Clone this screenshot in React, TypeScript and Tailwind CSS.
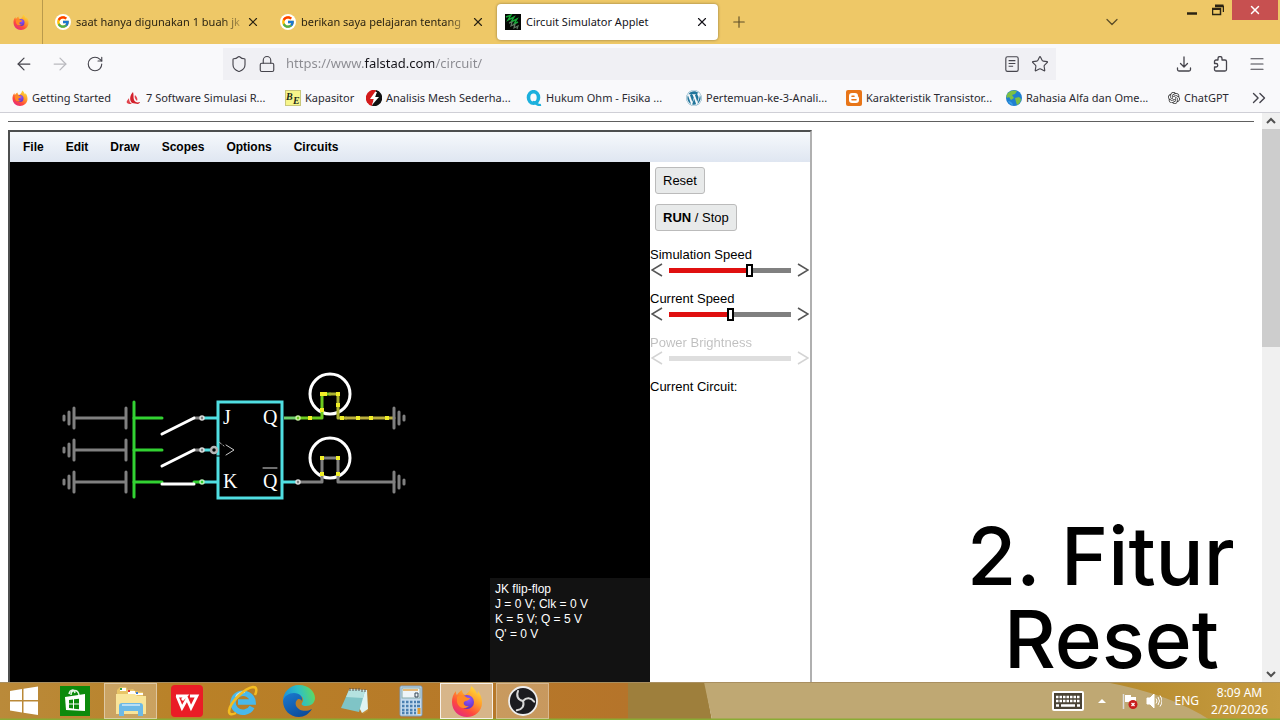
import type { ReactNode } from "react";
import { useState } from "react";
import {
  ArrowLeft,
  ArrowRight,
  ChevronDown,
  ChevronsRight,
  Lock,
  Menu,
  Plus,
  RotateCw,
  Shield,
  Star,
  X,
} from "lucide-react";
import { FcGoogle } from "react-icons/fc";
import { FaWordpress } from "react-icons/fa";
import { SiOpenai } from "react-icons/si";

function FirefoxIcon({ className }: { className: string }) {
  return (
    <svg viewBox="0 0 32 32" className={className} aria-hidden="true">
      <defs>
        <linearGradient id="fox" x1="0.85" y1="0" x2="0.2" y2="1">
          <stop offset="0" stopColor="#ffe63d" />
          <stop offset="0.4" stopColor="#ff9a2a" />
          <stop offset="0.7" stopColor="#ff4a3d" />
          <stop offset="1" stopColor="#e0258a" />
        </linearGradient>
        <radialGradient id="globe" cx="0.6" cy="0.3" r="0.8">
          <stop offset="0" stopColor="#9059ff" />
          <stop offset="1" stopColor="#5b2bb5" />
        </radialGradient>
      </defs>
      <path
        fill="url(#fox)"
        d="M20 1c3 2 5 5 6 8 1-1 1-2 1-3 3 4 4 8 4 12 0 8-7 14-15 14S1 26 1 17c0-4 1-8 4-11 0 2 0 3 1 4 1-2 3-4 5-5 0 2 1 4 3 5 3-2 6-5 6-9z"
      />
      <circle cx="16" cy="17" r="7" fill="url(#globe)" />
      <path fill="#ff8a26" d="M6 12c4-3 7-2 9 0 1 1 3 1 4 1-1 3-4 2-6 4-1 2 1 5 5 4-4 4-11 2-12-4z" />
    </svg>
  );
}

function CircuitIcon() {
  return (
    <svg viewBox="0 0 16 16" className="size-4 shrink-0" aria-hidden="true">
      <rect width="16" height="16" fill="#050805" />
      <path d="M1 3l5-2-3 5 6-3-3 5 6-3-3 5 4-2" fill="none" stroke="#16a836" strokeWidth="1.4" />
      <path d="M4 9l3-1-1 4 4-2-1 4 4-2-1 3" fill="none" stroke="#5f7562" strokeWidth="1.2" />
    </svg>
  );
}

function FlameIcon() {
  return (
    <svg viewBox="0 0 16 16" className="size-4 shrink-0" aria-hidden="true">
      <path fill="#d3202b" d="M7 2c-3 3-4 8-1 11l6 1c2-1 2-2 2-2-3 1-5 0-6-2-1-3 0-5-1-8z" />
      <path fill="#e0444c" d="M3 8c-1 2-3 3-2 5 1 1 3 1 5 1-2-1-3-3-3-6zM9 5c-1 2 0 4 2 6 1-2 0-4-2-6z" />
    </svg>
  );
}

function BasicElectronicsIcon() {
  return (
    <svg viewBox="0 0 16 16" className="size-4 shrink-0" aria-hidden="true">
      <rect x="0.5" y="0.5" width="15" height="15" fill="#f7f58a" stroke="#c9c77a" />
      <text x="1" y="10" fontFamily="Liberation Serif, serif" fontSize="10" fontWeight="700" fontStyle="italic" fill="#1c2b1c">
        B
      </text>
      <text x="8" y="14" fontFamily="Liberation Serif, serif" fontSize="10" fontWeight="700" fontStyle="italic" fill="#1c2b1c">
        E
      </text>
    </svg>
  );
}

function BoltIcon() {
  return (
    <svg viewBox="0 0 16 16" className="size-4 shrink-0" aria-hidden="true">
      <path fill="#d31b1b" d="M10 0A8 8 0 0 0 6 16l2-8z" />
      <path fill="#111" d="M10 0a8 8 0 0 1-4 16l3-8z" />
      <path fill="#fff" d="M9 2L4 9h4l-2 6 7-8H9l2-5z" />
    </svg>
  );
}

function QIcon() {
  return (
    <svg viewBox="0 0 16 16" className="size-4 shrink-0" aria-hidden="true">
      <ellipse cx="7.5" cy="7.5" rx="5" ry="5.8" fill="none" stroke="#1cb0dd" strokeWidth="3.6" />
      <path d="M7 12c3 0 4 4 8 3" fill="none" stroke="#1cb0dd" strokeWidth="2.4" />
    </svg>
  );
}

function BloggerIcon() {
  return (
    <svg viewBox="0 0 16 16" className="size-4 shrink-0" aria-hidden="true">
      <rect width="16" height="16" rx="2" fill="#e87518" />
      <path
        fill="#fff"
        fillRule="evenodd"
        d="M6 3h3a3 3 0 0 1 3 3c0 1 1 1 1 2v2a3 3 0 0 1-3 3H6a3 3 0 0 1-3-3V6a3 3 0 0 1 3-3zm0 2.5a.8.8 0 0 0 0 1.6h2a.8.8 0 0 0 0-1.6zm0 3.5a.8.8 0 0 0 0 1.6h4a.8.8 0 0 0 0-1.6z"
      />
    </svg>
  );
}

function EarthIcon() {
  return (
    <svg viewBox="0 0 16 16" className="size-4 shrink-0" aria-hidden="true">
      <circle cx="8" cy="8" r="8" fill="#1f7fd0" />
      <path fill="#7cc043" d="M2 3c3-3 7-3 9-2l-2 3-3 1 2 3-3 2-2-3-2 1c-1-2 0-4 1-5zM9 8l4-1 2 2c0 3-2 5-4 6l-1-3z" />
      <path fill="#3aa0e8" d="M2 11c2 0 4 1 5 4-2 0-4-2-5-4z" />
    </svg>
  );
}

type Bookmark = { label: string; width: string; icon: ReactNode };

const BOOKMARKS: Bookmark[] = [
  { label: "Getting Started", width: "w-[114px]", icon: <FirefoxIcon className="size-4 shrink-0" /> },
  { label: "7 Software Simulasi R...", width: "w-[159px]", icon: <FlameIcon /> },
  { label: "Kapasitor", width: "w-[81px]", icon: <BasicElectronicsIcon /> },
  { label: "Analisis Mesh Sederha...", width: "w-40", icon: <BoltIcon /> },
  { label: "Hukum Ohm - Fisika ...", width: "w-40", icon: <QIcon /> },
  { label: "Pertemuan-ke-3-Anali...", width: "w-40", icon: <FaWordpress className="size-4 shrink-0 text-[#21759b]" /> },
  { label: "Karakteristik Transistor...", width: "w-40", icon: <BloggerIcon /> },
  { label: "Rahasia Alfa dan Ome...", width: "w-[162px]", icon: <EarthIcon /> },
  { label: "ChatGPT", width: "w-20", icon: <SiOpenai className="size-3 shrink-0 text-[#333]" /> },
];

function SearchTab({ title }: { title: string }) {
  return (
    <div role="tab" aria-selected="false" className="flex w-[225px] shrink-0 items-center gap-[5px] pl-3">
      <span className="flex size-4 shrink-0 items-center justify-center rounded-full bg-white">
        <FcGoogle className="size-3.5" />
      </span>
      <span className="w-[166px] whitespace-nowrap [mask-image:linear-gradient(to_right,black_88%,transparent_103%)]">
        {title}
      </span>
      <button aria-label="Close tab" className="flex w-3 shrink-0 justify-center">
        <X className="size-3.5 shrink-0" strokeWidth={2} />
      </button>
    </div>
  );
}

function TabBar() {
  return (
    <div className="flex h-11 shrink-0 bg-[#eec867] text-[11px] text-[#2b2413]">
      <div role="tablist" className="flex items-stretch">
        <div role="tab" aria-selected="false" aria-label="Firefox" className="flex w-[43px] items-center justify-center border-r border-[#b99a4c]">
          <FirefoxIcon className="size-4" />
        </div>
        <SearchTab title="saat hanya digunakan 1 buah jk" />
        <SearchTab title="berikan saya pelajaran tentang" />
        <div
          role="tab"
          aria-selected="true"
          className="my-1 ml-1 flex w-[221px] items-center gap-[5px] rounded bg-white pr-[9px] pl-2 text-[#15141a] shadow-[0_0_3px_rgba(0,0,0,0.4)]"
        >
          <CircuitIcon />
          <span className="flex-1 whitespace-nowrap">Circuit Simulator Applet</span>
          <button aria-label="Close tab">
            <X className="size-3.5" strokeWidth={2} />
          </button>
        </div>
      </div>
      <button aria-label="New tab" className="ml-3 text-[#5c4d28]">
        <Plus className="size-[18px]" strokeWidth={1.5} />
      </button>
      <div className="ml-auto flex">
        <button aria-label="List all tabs" className="mr-[58px] text-[#5c4d28]">
          <ChevronDown className="size-5" strokeWidth={1.5} />
        </button>
        <button aria-label="Minimize" className="flex h-5 w-6 items-center justify-center">
          <svg viewBox="0 0 12 12" className="size-3">
            <path d="M1 9.5h10" stroke="#2b2413" strokeWidth="2.5" />
          </svg>
        </button>
        <button aria-label="Restore" className="flex h-5 w-7 items-center justify-center">
          <svg viewBox="0 0 12 12" className="size-3" fill="none" stroke="#2b2413">
            <path d="M3 2.5h8.5V8" strokeWidth="1.5" />
            <path d="M0.5 4.5h8v6h-8z" strokeWidth="1.5" />
            <path d="M0.5 5h8M3 1.5h8.5" strokeWidth="2" />
          </svg>
        </button>
        <button aria-label="Close" className="mr-0.5 flex h-5 w-[46px] items-center justify-center bg-[#c75050] text-white">
          <X className="size-3.5" strokeWidth={2.5} />
        </button>
      </div>
    </div>
  );
}

function NavBar() {
  return (
    <div className="flex h-10 shrink-0 items-center bg-[#f9f9fb] text-[#45444c]">
      <div className="flex w-[223px] shrink-0 items-center gap-4 pl-3.5">
        <button aria-label="Back" className="w-5">
          <ArrowLeft className="size-5" strokeWidth={1.5} />
        </button>
        <button aria-label="Forward" className="w-5 text-[#b9b9be]" disabled>
          <ArrowRight className="size-5" strokeWidth={1.5} />
        </button>
        <button aria-label="Reload" className="w-5">
          <RotateCw className="size-[18px]" strokeWidth={1.5} />
        </button>
      </div>
      <div className="flex h-8 flex-1 items-center bg-[#f0f0f4] px-[7px]">
        <Shield className="mr-2.5 size-[18px] shrink-0" strokeWidth={1.5} />
        <Lock className="mr-2.5 size-[18px] shrink-0" strokeWidth={1.5} />
        <input
          aria-label="Address"
          defaultValue="https://www.falstad.com/circuit/"
          className="min-w-0 flex-1 bg-[linear-gradient(to_right,#8a8a90_78px,#15141a_78px,#15141a_148px,#8a8a90_148px)] bg-clip-text text-[13px] text-transparent outline-none"
        />
        <button aria-label="Reader view" className="mr-2.5">
          <svg viewBox="0 0 16 16" className="size-[18px]" fill="none" stroke="currentColor">
            <rect x="2.5" y="1.5" width="11" height="13" rx="1.5" />
            <path d="M5 5h6M5 7.5h6M5 10h4" />
          </svg>
        </button>
        <button aria-label="Bookmark this page">
          <Star className="size-[18px]" strokeWidth={1.5} />
        </button>
      </div>
      <div className="ml-28 flex w-28 shrink-0 items-center justify-between pr-3.5 pl-2">
        <button aria-label="Downloads">
          <svg viewBox="0 0 16 16" className="size-4" fill="none" stroke="currentColor" strokeWidth="1.3" strokeLinecap="round" strokeLinejoin="round">
            <path d="M8 1v9.5M4.5 7.5L8 11l3.5-3.5M1.5 12v1.5a1.5 1.5 0 0 0 1.5 1.5h10a1.5 1.5 0 0 0 1.5-1.5V12" />
          </svg>
        </button>
        <button aria-label="Extensions">
          <svg viewBox="0 0 16 16" className="size-4" fill="none" stroke="currentColor" strokeWidth="1.3" strokeLinejoin="round">
            <path d="M6 4V2.5a2 2 0 0 1 4 0V4h3a1.5 1.5 0 0 1 1.5 1.5v8A1.5 1.5 0 0 1 13 15H4a1.5 1.5 0 0 1-1.5-1.5V11H4a1.7 1.7 0 0 0 0-3.5H2.500v-2A1.500 1.500 0 0 1 4 4z" />
          </svg>
        </button>
        <button aria-label="Menu">
          <Menu className="size-[18px]" strokeWidth={1.5} />
        </button>
      </div>
    </div>
  );
}

function BookmarksBar() {
  return (
    <nav className="flex h-[29px] shrink-0 items-center border-b border-[#cfcfd6] bg-[#f9f9fb] pl-3 text-[11px] text-[#2a2930]">
      {BOOKMARKS.map((b) => (
        <a key={b.label} href="#" className={`flex shrink-0 items-center gap-1 whitespace-nowrap ${b.width}`}>
          {b.icon}
          {b.label}
        </a>
      ))}
      <button aria-label="More bookmarks" className="ml-auto pr-2.5 text-[#45444c]">
        <ChevronsRight className="size-[22px]" strokeWidth={1.5} />
      </button>
    </nav>
  );
}

const ROWS = [418, 450, 482];

function Circuit() {
  return (
    <svg viewBox="10 162 640 520" className="block h-full w-full" fill="none" strokeWidth="3" strokeLinecap="round" role="img" aria-label="JK flip-flop circuit">
      {ROWS.map((y) => (
        <g key={y}>
          <path
            stroke="#808080"
            d={`M64 ${y - 2}v4M69 ${y - 6}v12M74 ${y - 10}v20M74 ${y}h52M126 ${y - 10}v20`}
          />
          <path stroke="#32d232" d={`M134 ${y}h28`} />
        </g>
      ))}
      <path stroke="#32d232" d="M134 402v95" />

      <path stroke="#808080" d="M194 418h8M194 450h8" />
      <path stroke="#32d232" d="M194 482h8" />
      <path stroke="#fff" d="M162 434l32-16M162 466l32-16M162 484h32" />
      <path stroke="#50dfe2" strokeLinecap="butt" d="M203 418h15M203 450h7M203 482h15M282 482h15" />
      <rect x="218" y="402" width="64" height="96" stroke="#50dfe2" />
      <path stroke="#000" strokeWidth="1" d="M216 456h4" />
      <circle cx="214" cy="450" r="3" stroke="#b5b5b5" strokeWidth="2.5" />
      <path stroke="#aaa" strokeWidth="1" strokeDasharray="3 2" d="M219 442l5 4" />
      <path stroke="#ccc" strokeWidth="1" d="M226 445l8 5-8 5" />
      <g strokeWidth="1.5" stroke="#ddd">
        <circle cx="202" cy="418" r="2" />
        <circle cx="202" cy="450" r="2" />
        <circle cx="202" cy="482" r="2" stroke="#b8f0b8" fill="#32d232" />
      </g>
      <g fill="#fff" fontFamily="Liberation Serif, serif" fontSize="20">
        <text x="223" y="424">J</text>
        <text x="223" y="488">K</text>
        <text x="263" y="424">Q</text>
        <text x="263" y="488">Q</text>
      </g>
      <path stroke="#ddd" strokeWidth="1" d="M263 468h14" />

      <circle cx="330" cy="394" r="20" stroke="#fff" />
      <path stroke="#6fd06a" strokeLinecap="butt" d="M284 418h14" />
      <path stroke="#6ccb1e" strokeLinejoin="round" d="M298 418h24v-24h8" />
      <path stroke="#a9b030" strokeLinejoin="round" d="M330 394h8v24h8" />
      <path stroke="#b9ad3c" d="M346 418h48" />
      <circle cx="298" cy="418" r="2" stroke="#c8f0a0" strokeWidth="1.5" />
      <path
        stroke="#f0ee28"
        strokeWidth="4"
        strokeLinecap="butt"
        d="M308 418h4M320 394h7M336 394h4M336 405h4M320 410h4M340 418h4M356 418h4M369 418h4M385 418h4"
      />

      <circle cx="330" cy="458" r="20" stroke="#fff" />
      <path stroke="#808080" strokeLinejoin="round" d="M298 482h24v-24h16v24h56" />
      <circle cx="298" cy="482" r="2" stroke="#ddd" strokeWidth="1.5" />
      <path stroke="#f0ee28" strokeWidth="4" strokeLinecap="butt" d="M320 458h4M336 458h4M320 474h4M336 474h4" />

      {[418, 482].map((y) => (
        <path key={y} stroke="#808080" d={`M394 ${y - 10}v20M399 ${y - 6}v12M404 ${y - 2}v4`} />
      ))}
    </svg>
  );
}

function Arrow({ right = false }: { right?: boolean }) {
  return (
    <svg viewBox="0 0 12 14" className="h-[14px] w-3" fill="none" stroke="#555" strokeWidth="1.5" aria-hidden="true">
      <path d={right ? "M1 1l10 6-10 6" : "M11 1L1 7l10 6"} />
    </svg>
  );
}

type SpeedSliderProps = { id: string; label: string; initial: number; disabled?: boolean };

function SpeedSlider({ id, label, initial, disabled = false }: SpeedSliderProps) {
  const [value, setValue] = useState(initial);
  const fill = disabled
    ? "#808080"
    : `linear-gradient(to right, #e01010 ${value}%, #808080 ${value}%)`;
  return (
    <div className={disabled ? "opacity-25" : ""}>
      <label htmlFor={id} className="block leading-4">
        {label}
      </label>
      <div className="flex h-[14px] items-center justify-between px-px">
        <button aria-label={`Decrease ${label}`} disabled={disabled} onClick={() => setValue(value - 1)}>
          <Arrow />
        </button>
        <input
          id={id}
          type="range"
          value={value}
          disabled={disabled}
          onChange={(e) => setValue(Number(e.target.value))}
          style={{ background: fill }}
          className={
            disabled
              ? "h-[5px] w-[122px] appearance-none [&::-webkit-slider-thumb]:appearance-none"
              : "h-[5px] w-[122px] appearance-none [&::-webkit-slider-thumb]:h-[13px] [&::-webkit-slider-thumb]:w-[7px] [&::-webkit-slider-thumb]:appearance-none [&::-webkit-slider-thumb]:border-2 [&::-webkit-slider-thumb]:border-black [&::-webkit-slider-thumb]:bg-white"
          }
        />
        <button aria-label={`Increase ${label}`} disabled={disabled} onClick={() => setValue(value + 1)}>
          <Arrow right />
        </button>
      </div>
    </div>
  );
}

const MENUS = ["File", "Edit", "Draw", "Scopes", "Options", "Circuits"];

function Applet() {
  return (
    <section className="flex min-h-0 w-[804px] flex-1 flex-col border-t-2 border-r-2 border-l-2 border-t-[#4d4f4f] border-r-[#b0b0b0] border-l-[#4d4f4f] font-['Liberation_Sans',sans-serif]">
      <div className="flex h-[30px] shrink-0 items-center gap-[22px] bg-linear-to-b from-[#f6f9fc] to-[#dfe6f1] px-[13px] text-xs font-bold">
        {MENUS.map((m) => (
          <button key={m}>{m}</button>
        ))}
      </div>
      <div className="flex min-h-0 flex-1">
        <div className="relative min-w-0 flex-1 bg-black">
          <Circuit />
          <div className="absolute right-0 bottom-0 h-[104px] w-40 bg-[#121212] px-[5px] py-1 text-xs leading-[15px] text-white">
            <p>JK flip-flop</p>
            <p>J = 0 V; Clk = 0 V</p>
            <p>K = 5 V; Q = 5 V</p>
            <p>Q' = 0 V</p>
          </div>
        </div>
        <aside className="w-40 shrink-0 bg-white pt-[5px] text-[13px]">
          <div className="flex flex-col items-start gap-2.5 pl-[5px]">
            <button className="h-[27px] rounded-[3px] border border-[#bbb] bg-[#e8eaea] px-[7px]">Reset</button>
            <button className="h-[27px] rounded-[3px] border border-[#bbb] bg-[#e8eaea] px-[7px]">
              <b>RUN</b> / Stop
            </button>
          </div>
          <div className="mt-4 flex flex-col gap-3.5">
            <SpeedSlider id="sim-speed" label="Simulation Speed" initial={67} />
            <SpeedSlider id="current-speed" label="Current Speed" initial={50} />
            <SpeedSlider id="power" label="Power Brightness" initial={50} disabled />
            <p className="leading-4">Current Circuit:</p>
          </div>
        </aside>
      </div>
    </section>
  );
}

function Scrollbar() {
  return (
    <div className="flex w-[18px] shrink-0 flex-col items-center bg-[#f0f0f0] text-[#505050]">
      <svg viewBox="0 0 10 16" className="h-4 w-2.5" fill="none" stroke="currentColor" strokeWidth="2">
        <path d="M1 10l4-4 4 4" />
      </svg>
      <div className="h-[218px] w-full bg-[#cdcdcd]" />
      <svg viewBox="0 0 10 16" className="mt-auto h-4 w-2.5" fill="none" stroke="currentColor" strokeWidth="2">
        <path d="M1 6l4 4 4-4" />
      </svg>
    </div>
  );
}

function WindowsIcon() {
  return (
    <svg viewBox="0 0 30 30" className="size-[30px]" fill="#fff">
      <path d="M1 5l12-2v11H1zM14.5 2.7L29 .5V14H14.500zM1 15.500h12v11L1 24.500zM14.500 15.500H29V29l-14.500-2.300z" />
    </svg>
  );
}

function StoreIcon() {
  return (
    <svg viewBox="0 0 30 30" className="size-[30px]">
      <rect width="30" height="30" fill="#0c8a0c" />
      <path d="M11 9c0-6 7-6 8 0M9 8c1-5 5-5 6-1" fill="none" stroke="#e8f5e8" strokeWidth="1.5" />
      <path fill="#fff" d="M5 11l20-3v17L6 24z" />
      <path fill="#0c8a0c" d="M9 14l4-.5v4H9zM14 13.300l5-.6v4.800h-5zM9 18.500h4v4l-4-.5zM14 18.500h5v4.800l-5-.6z" />
    </svg>
  );
}

function ExplorerIcon() {
  return (
    <svg viewBox="0 0 32 32" className="size-8">
      <path fill="#e9c567" d="M2 5l3-3h6l2 3 5-1 2 2 8 1v22H2z" />
      <path fill="#fff" d="M5 3h6v3H5zM13 6h7v3h-7zM20 8h8v2h-8z" />
      <path fill="#2f9e44" d="M5 3h2v2H5z" />
      <path fill="#d33" d="M13 5h2v2h-2z" />
      <path fill="#3a7bd5" d="M21 7h2v2h-2z" />
      <path fill="#f9e59a" d="M1 9h19l2 2h9v18H1z" />
      <path fill="#6db9e6" d="M4 21c0-2 1-3 3-3h18c2 0 3 1 3 3v10h-5v-5H9v5H4z" />
      <path fill="#b9def4" d="M7 19h18v2H7z" />
    </svg>
  );
}

function WpsIcon() {
  return (
    <svg viewBox="0 0 32 32" className="size-8">
      <rect width="32" height="32" rx="4" fill="#ea1c26" />
      <path d="M5 11h10l-4 4M6 11l5 12 5-9 4 9 6-12h-7" fill="none" stroke="#fff" strokeWidth="2.8" />
    </svg>
  );
}

function InternetExplorerIcon() {
  return (
    <svg viewBox="0 0 32 32" className="size-8" fill="none">
      <path d="M25 22a10 9.500 0 1 1 1-5H11" stroke="#49b9ea" strokeWidth="5.5" />
      <path d="M9 12c2-4 5-5 9-5" stroke="#b4e6fa" strokeWidth="2" />
      <path
        d="M28 10c2-4 2-8-2-8C18 3 3 17 2 26c0 4 3 4 7 2"
        stroke="#f5bd20"
        strokeWidth="2.5"
      />
    </svg>
  );
}

function EdgeIcon() {
  return (
    <svg viewBox="0 0 32 32" className="size-8">
      <defs>
        <linearGradient id="edge-top" x1="0" y1="0.5" x2="1" y2="0.3">
          <stop offset="0" stopColor="#1b8fdc" />
          <stop offset="0.5" stopColor="#2dbfc6" />
          <stop offset="1" stopColor="#62dc5a" />
        </linearGradient>
        <linearGradient id="edge-low" x1="0" y1="0" x2="0.6" y2="1">
          <stop offset="0" stopColor="#1b7bd0" />
          <stop offset="1" stopColor="#0c4c9c" />
        </linearGradient>
      </defs>
      <path fill="url(#edge-top)" d="M0 16C0 7 7 0 16 0c10 0 16 7 16 13 0 5-4 8-9 8-4 0-5-2-4-3 3-4 0-8-5-8C7 10 1 14 0 16z" />
      <path fill="url(#edge-low)" d="M0 16c1-5 6-8 11-8 6 0 9 4 8 8-1-2-3-2-4-2-7 6 3 16 14 10-3 5-8 8-13 8C7 32 0 25 0 16z" />
    </svg>
  );
}

function NotepadIcon() {
  return (
    <svg viewBox="0 0 32 32" className="size-8">
      <path fill="#c58d38" d="M22 6l7 20-5 3z" />
      <path fill="#dff3f2" d="M10 4l18 1 1 19-6 4z" />
      <path fill="#7fc4c6" d="M10 5l16 1-6 21-18-4z" />
      <path fill="#b5e2e0" d="M10 5l16 1-2 7-17-1z" />
      <path d="M11 3v3M14 3v3M17 3v3M20 3v3M23 4v3M26 4v3" stroke="#555" />
    </svg>
  );
}

function CalculatorIcon() {
  return (
    <svg viewBox="0 0 32 32" className="size-8">
      <rect x="5" y="1" width="22" height="30" rx="1.5" fill="#c3daee" stroke="#7c9cb8" />
      <rect x="7" y="3" width="18" height="10" fill="#eef4f8" stroke="#8aa" />
      <path d="M8 5h15" stroke="#e5b878" strokeWidth="2" />
      <path d="M20 8h3v4h-3z" fill="none" stroke="#345" />
      {[17, 21, 25, 28].map((y) => (
        <path key={y} d={`M7 ${y}h14`} stroke="#4a7fb0" strokeWidth="2.5" strokeDasharray="2.5 1.5" />
      ))}
      <path d="M22 17h3M22 21h3" stroke="#4a7fb0" strokeWidth="2.5" />
      <path d="M24 23v6" stroke="#e39a2c" strokeWidth="3" />
    </svg>
  );
}

function ObsIcon() {
  return (
    <svg viewBox="0 0 32 32" className="size-8">
      <circle cx="16" cy="16" r="14" fill="#1c1c20" stroke="#eee" strokeWidth="1.8" />
      <g fill="none" stroke="#d8d8d8" strokeWidth="2" strokeLinecap="round">
        <path d="M16 16c-5-1-7-5-5-10" />
        <path d="M16 16c-5-1-7-5-5-10" transform="rotate(120 16 16)" />
        <path d="M16 16c-5-1-7-5-5-10" transform="rotate(240 16 16)" />
      </g>
    </svg>
  );
}

const APPS = [
  { name: "Store", icon: <StoreIcon />, look: "border-transparent" },
  { name: "File Explorer", icon: <ExplorerIcon />, look: "border-white/40 bg-white/25" },
  { name: "WPS Office", icon: <WpsIcon />, look: "border-transparent" },
  { name: "Internet Explorer", icon: <InternetExplorerIcon />, look: "border-transparent" },
  { name: "Microsoft Edge", icon: <EdgeIcon />, look: "border-transparent" },
  { name: "Notepad", icon: <NotepadIcon />, look: "border-transparent" },
  { name: "Calculator", icon: <CalculatorIcon />, look: "border-transparent" },
  { name: "Firefox", icon: <FirefoxIcon className="size-8" />, look: "border-white/80 bg-white/45" },
  { name: "OBS Studio", icon: <ObsIcon />, look: "border-white/30 bg-white/25" },
];

function Wallpaper() {
  return (
    <svg viewBox="0 0 1280 38" preserveAspectRatio="none" className="absolute inset-0 h-full w-full" aria-hidden="true">
      <defs>
        <linearGradient id="gold">
          <stop offset="0" stopColor="#ba8a3a" />
          <stop offset="0.3" stopColor="#b98127" />
          <stop offset="1" stopColor="#b5742a" />
        </linearGradient>
        <linearGradient id="corner">
          <stop offset="0" stopColor="#b58a2c" />
          <stop offset="1" stopColor="#c79c41" />
        </linearGradient>
      </defs>
      <rect width="630" height="38" fill="url(#gold)" />
      <path d="M628 0h77l7 38h-84z" fill="#9e7f3c" />
      <path d="M704 0h576v38H712z" fill="#bfa873" />
      <path d="M1105 0h175v38h-70q-40-26-105-38z" fill="url(#corner)" />
      <path d="M0 0.500h1280" stroke="#a98f60" />
      <path d="M0 37.500h1280" stroke="#8aab35" strokeWidth="2" />
    </svg>
  );
}

function Taskbar() {
  return (
    <footer className="relative h-[38px] shrink-0">
      <Wallpaper />
      <div className="relative flex h-full items-center text-xs text-white">
        <button aria-label="Start" className="flex w-12 justify-center">
          <WindowsIcon />
        </button>
        <div className="flex gap-[3px]">
          {APPS.map((app) => (
            <button key={app.name} aria-label={app.name} className={`flex h-9 w-[53px] items-center justify-center border ${app.look}`}>
              {app.icon}
            </button>
          ))}
        </div>
        <div className="ml-auto flex items-center pr-3">
          <button aria-label="Touch keyboard">
            <svg viewBox="0 0 32 20" className="h-5 w-8">
              <rect x="1" y="1" width="30" height="18" rx="1" fill="#4a4335" stroke="#fff" strokeWidth="2" />
              <path d="M4 6h24M4 10h24" stroke="#fff" strokeWidth="2.5" strokeDasharray="2.5 1" />
              <path d="M4 14.5h3M9 14.5h14M25 14.5h3" stroke="#fff" strokeWidth="2.5" />
            </svg>
          </button>
          <button aria-label="Show hidden icons" className="ml-3.5">
            <svg viewBox="0 0 8 6" className="h-1.5 w-2">
              <path d="M0 5l4-4 4 4z" fill="#fff" />
            </svg>
          </button>
          <button aria-label="Action center" className="ml-4">
            <svg viewBox="0 0 16 16" className="size-4">
              <path d="M1.5 1v15" stroke="#ddd" strokeWidth="1.5" />
              <path d="M3 2h6v2h5v7H9V9H3z" fill="#fff" />
              <circle cx="11" cy="11.5" r="4.5" fill="#c81e1e" />
              <path d="M9.5 10l3 3M12.5 10l-3 3" stroke="#fff" strokeWidth="1.3" />
            </svg>
          </button>
          <button aria-label="Volume" className="ml-2">
            <svg viewBox="0 0 16 16" className="size-4" fill="none" stroke="#fff">
              <path d="M1 5h3l4-4v14l-4-4H1z" fill="#fff" />
              <path d="M10 5.5q2 2.5 0 5M12 4q3 4 0 8M14 2.5q4 5.5 0 11" />
            </svg>
          </button>
          <button className="ml-3">ENG</button>
          <button className="ml-3 flex flex-col items-center leading-[17px]">
            <span>8:09 AM</span>
            <span>2/20/2026</span>
          </button>
        </div>
      </div>
    </footer>
  );
}

export default function App() {
  return (
    <div className="relative flex h-screen flex-col overflow-hidden bg-white font-['Noto_Sans',sans-serif] text-black">
      <header>
        <TabBar />
        <NavBar />
        <BookmarksBar />
      </header>
      <main className="flex min-h-0 flex-1">
        <div className="flex min-w-0 flex-1 flex-col px-2 pt-2">
          <hr className="mb-2 border-t border-[#606060]" />
          <Applet />
        </div>
        <Scrollbar />
      </main>
      <Taskbar />
      <p className="absolute right-6 bottom-10 text-center font-['Inter',sans-serif] text-[80px] leading-[83px] font-medium whitespace-pre">
        {"2. Fitur \nReset"}
      </p>
    </div>
  );
}
